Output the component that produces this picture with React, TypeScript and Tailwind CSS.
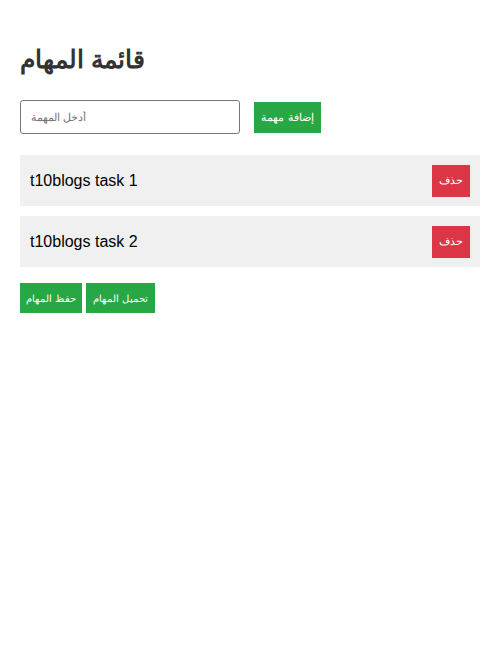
const tasks = ['t10blogs task 1', 't10blogs task 2'];

const App = () => {
  return (
    <div className="min-h-[647px] bg-white p-5 font-['Liberation_Sans',Arial,sans-serif] text-[#333]">
      <h1 className="mt-[21px] mb-[22px] text-[25px] font-bold leading-[37px]">قائمة المهام</h1>
      <div className="flex items-center">
        <input
          type="text"
          placeholder="أدخل المهمة"
          className="h-[34px] w-[220px] rounded-[3px] border border-[#767676] px-[10px] text-[11px] text-black placeholder:text-[#757575] outline-none"
        />
        <button className="ml-[14px] h-[31px] w-[67px] bg-[#28a745] text-[11px] text-white">
          إضافة مهمة
        </button>
      </div>
      <ul className="mt-[21px] flex flex-col gap-[10px]">
        {tasks.map((task) => (
          <li
            key={task}
            className="flex h-[51px] items-center justify-between bg-[#f0f0f0] px-[10px]"
          >
            <span className="text-[16px] text-black">{task}</span>
            <button className="h-[32px] w-[38px] bg-[#dc3545] text-[11px] text-white">حذف</button>
          </li>
        ))}
      </ul>
      <div className="mt-[16px] flex gap-1">
        <button className="h-[30px] w-[62px] bg-[#28a745] text-[10px] text-white">حفظ المهام</button>
        <button className="h-[30px] w-[69px] bg-[#28a745] text-[10px] text-white">تحميل المهام</button>
      </div>
    </div>
  );
};

export default App;
